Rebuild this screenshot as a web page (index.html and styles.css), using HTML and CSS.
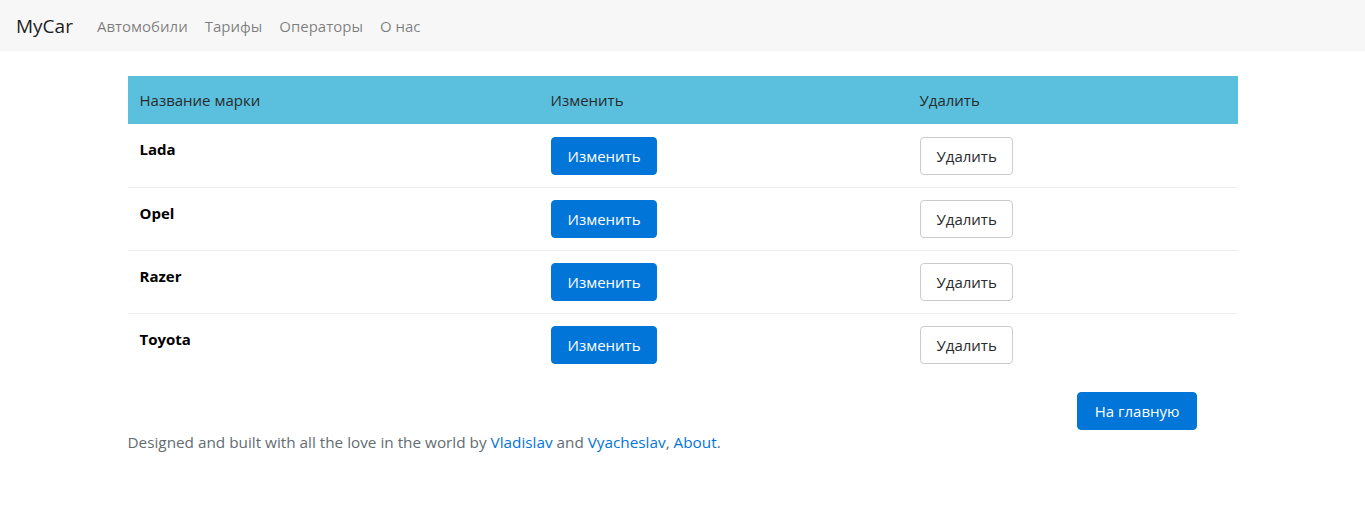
FILE: index.html
```html
<!DOCTYPE html>
<html lang="ru">
<head>
<meta charset="utf-8">
<title>MyCar</title>
<link rel="stylesheet" href="styles.css">
</head>
<body>
<nav class="navbar">
  <a class="brand" href="#">MyCar</a>
  <ul class="nav">
    <li><a href="#">Автомобили</a></li>
    <li><a href="#">Тарифы</a></li>
    <li><a href="#">Операторы</a></li>
    <li><a href="#">О нас</a></li>
  </ul>
</nav>
<main class="container">
  <table class="table">
    <thead>
      <tr><th class="c1">Название марки</th><th class="c2">Изменить</th><th class="c3">Удалить</th></tr>
    </thead>
    <tbody>
      <tr><td class="name">Lada</td><td><button class="btn btn-primary">Изменить</button></td><td><button class="btn btn-secondary">Удалить</button></td></tr>
      <tr><td class="name">Opel</td><td><button class="btn btn-primary">Изменить</button></td><td><button class="btn btn-secondary">Удалить</button></td></tr>
      <tr><td class="name">Razer</td><td><button class="btn btn-primary">Изменить</button></td><td><button class="btn btn-secondary">Удалить</button></td></tr>
      <tr><td class="name">Toyota</td><td><button class="btn btn-primary">Изменить</button></td><td><button class="btn btn-secondary">Удалить</button></td></tr>
    </tbody>
  </table>
  <div class="actions"><button class="btn btn-primary btn-home">На главную</button></div>
  <footer class="footer">Designed and built with all the love in the world by <a href="#">Vladislav</a> and <a href="#">Vyacheslav</a>, <a href="#">About</a>.</footer>
</main>
</body>
</html>
```
FILE: styles.css
```css
* { box-sizing: border-box; }
body {
  margin: 0;
  font-family: "Open Sans", "Noto Sans", sans-serif;
  font-size: 15px;
  line-height: 24px;
  color: #292b2c;
  background: #fff;
}
a { text-decoration: none; color: #0275d8; }
.navbar {
  display: flex;
  align-items: center;
  height: 51px;
  padding: 0 16px;
  background: #f7f7f7;
}
.brand {
  font-size: 19px;
  color: rgba(0,0,0,.9);
  margin-right: 24px;
}
.nav {
  display: flex;
  list-style: none;
  margin: 0;
  padding: 0;
  gap: 17px;
}
.nav a { color: rgba(0,0,0,.5); font-size: 15px; }
.container {
  width: 1110px;
  margin: 25px auto 0;
}
.table {
  width: 100%;
  border-collapse: collapse;
}
.table th {
  background: #5bc0de;
  font-weight: 400;
  text-align: left;
  padding: 12px;
  height: 48px;
  color: #292b2c;
}
.c1 { width: 411px; }
.c2 { width: 369px; }
.table td {
  padding: 12px;
  border-top: 1px solid #eceeef;
  vertical-align: top;
}
.table tbody tr:first-child td { border-top: 0; padding-top: 13px; }
.name { font-weight: 700; color: #000; padding-top: 13px !important; }
.btn {
  font-family: inherit;
  font-size: 15px;
  line-height: 24px;
  padding: 6px 15px 6px 16px;
  border-radius: 4px;
  border: 1px solid transparent;
  cursor: pointer;
  display: inline-block;
}
.btn-primary { background: #0275d8; border-color: #0275d8; color: #fff; }
.btn-secondary { background: #fff; border-color: #ccc; color: #292b2c; }
.btn-home { padding: 6px 16px 6px 17px; }
.actions {
  display: flex;
  justify-content: flex-end;
  padding-right: 41px;
  margin-top: 16px;
}
.footer {
  color: #636c72;
  font-size: 15.3px;
}
```
